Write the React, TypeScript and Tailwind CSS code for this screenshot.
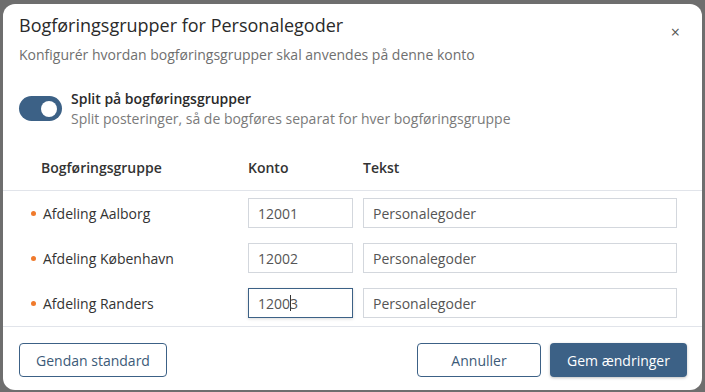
import React from "react";

const rows = [
  { name: "Afdeling Aalborg", konto: "12001", tekst: "Personalegoder", focus: false },
  { name: "Afdeling København", konto: "12002", tekst: "Personalegoder", focus: false },
  { name: "Afdeling Randers", konto: "12003", tekst: "Personalegoder", focus: true },
];

export default function App() {
  return (
    <div
      className="w-[705px] h-[392px] bg-[#6e6e6e] overflow-hidden pt-[4px] pl-[3px]"
      style={{ fontFamily: '"Open Sans", "Noto Sans", sans-serif' }}
    >
      <div className="w-[699px] h-[386px] bg-white rounded-[12px] flex flex-col">
        {/* Header */}
        <div className="flex items-start justify-between pl-[16px] pr-[22px] pt-[8px]">
          <div className="flex flex-col">
            <div className="text-[18px] leading-[26px] text-[#2a2a2a]">Bogføringsgrupper for Personalegoder</div>
            <div className="mt-[7px] text-[14px] leading-[20px] text-[#6f6f6f]">
              Konfigurér hvordan bogføringsgrupper skal anvendes på denne konto
            </div>
          </div>
          <div className="mt-[12px] text-[#555] text-[16px] leading-[16px]">×</div>
        </div>

        {/* Toggle */}
        <div className="flex items-start pl-[16px] mt-[24px]">
          <div className="mt-[7px] w-[43px] h-[25px] rounded-full bg-[#3c6186] flex items-center justify-end pr-[5px]">
            <div className="w-[16px] h-[16px] rounded-full bg-white" />
          </div>
          <div className="ml-[9px] flex flex-col">
            <div className="text-[14px] leading-[20px] font-semibold text-[#2a2a2a]">Split på bogføringsgrupper</div>
            <div className="text-[14px] leading-[20px] text-[#7a7a7a]">
              Split posteringer, så de bogføres separat for hver bogføringsgruppe
            </div>
          </div>
        </div>

        {/* Table header */}
        <div className="mt-[29px] grid grid-cols-[245px_115px_1fr] pr-[25px] pb-[12px] border-b border-[#e1e4ea] text-[14px] leading-[20px] font-semibold text-[#333]">
          <div className="pl-[38px]">Bogføringsgruppe</div>
          <div>Konto</div>
          <div>Tekst</div>
        </div>

        {/* Rows */}
        <div className="flex flex-col gap-[15px] pt-[7px] pb-[8px] border-b border-[#e1e4ea]">
          {rows.map((r) => (
            <div key={r.name} className="grid grid-cols-[245px_115px_1fr] pr-[25px] items-center">
              <div className="pl-[28px] flex items-center gap-[7px]">
                <span className="w-[5px] h-[5px] rounded-full bg-[#f07a2c]" />
                <span className="text-[14px] text-[#333]">{r.name}</span>
              </div>
              <div>
                <div
                  className={
                    "w-[105px] h-[30px] flex items-center pl-[9px] text-[14px] text-[#555] border " +
                    (r.focus ? "border-[#3c6186] shadow-[0_1px_3px_rgba(0,0,0,0.15)]" : "border-[#d3d7dd]")
                  }
                >
                  {r.focus ? (
                    <span className="flex items-center">
                      1200<span className="inline-block w-[1px] h-[16px] bg-[#333] mx-[-0.5px]" />3
                    </span>
                  ) : (
                    r.konto
                  )}
                </div>
              </div>
              <div>
                <div className="h-[30px] flex items-center pl-[9px] text-[14px] text-[#555] border border-[#d3d7dd]">
                  {r.tekst}
                </div>
              </div>
            </div>
          ))}
        </div>

        {/* Footer */}
        <div className="flex items-center justify-between pl-[16px] pr-[15px] pt-[16px]">
          <button className="h-[34px] w-[148px] rounded-[4px] border border-[#3c6186] text-[14px] text-[#3c5a78] bg-white">
            Gendan standard
          </button>
          <div className="flex items-center gap-[9px]">
            <button className="h-[34px] w-[124px] rounded-[4px] border border-[#3c6186] text-[14px] text-[#3c5a78] bg-white">
              Annuller
            </button>
            <button className="h-[34px] w-[137px] rounded-[4px] bg-[#3c6186] text-[14px] text-white shadow-[0_1px_3px_rgba(0,0,0,0.25)]">
              Gem ændringer
            </button>
          </div>
        </div>
      </div>
    </div>
  );
}
